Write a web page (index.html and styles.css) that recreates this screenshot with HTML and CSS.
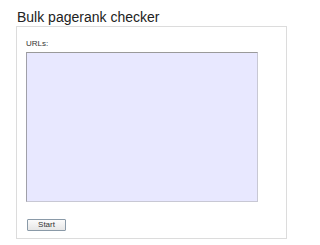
FILE: index.html
```html
<!DOCTYPE html>
<html>
<head>
<meta charset="utf-8">
<link rel="stylesheet" href="styles.css">
</head>
<body>
<h1 class="title">Bulk pagerank checker</h1>
<div class="panel">
  <label class="label" for="urls">URLs:</label>
  <textarea id="urls" class="urls"></textarea>
  <button class="start">Start</button>
</div>
</body>
</html>
```
FILE: styles.css
```css
html, body { margin: 0; padding: 0; background: #fff; }
body { font-family: "Liberation Sans", Arial, sans-serif; padding: 9px 0 0 16px; }
.title { margin: 0 0 0 1px; font-size: 14px; font-weight: normal; color: #222; line-height: 16px; }
.panel {
  margin-top: 1px;
  width: 269px;
  height: 211px;
  border: 1px solid #dcdcdc;
  padding: 12px 0 0 9px;
  box-sizing: border-box;
  width: 271px;
  height: 213px;
  display: flex;
  flex-direction: column;
  align-items: flex-start;
}
.label { font-size: 8px; color: #333; line-height: 10px; }
.urls {
  margin: 3px 0 0 0;
  width: 232px;
  height: 150px;
  box-sizing: border-box;
  background: #e8e8ff;
  border: 1px solid #c8c8d4;
  border-top-color: #9a9a9a;
  border-left-color: #a0a0a8;
  padding: 0;
  resize: none;
}
.start {
  margin: 17px 0 0 1px;
  width: 39px;
  height: 12px;
  padding: 0;
  font-family: "Liberation Sans", Arial, sans-serif;
  font-size: 8px;
  line-height: 10px;
  color: #333;
  background: linear-gradient(#fbfbfb, #e6e6e6);
  border: 1px solid #8a9aa8;
  border-radius: 1px;
}
```
